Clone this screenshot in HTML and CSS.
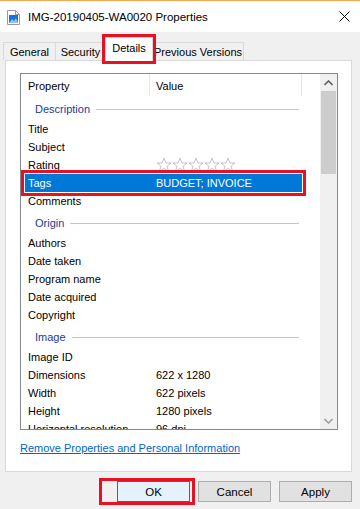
FILE: index.html
```html
<!DOCTYPE html>
<html lang="en">
<head>
    <meta charset="UTF-8">
    <meta name="viewport" content="width=device-width, initial-scale=1.0">
    <title>IMG-20190405-WA0020 Properties</title>
    <link rel="stylesheet" href="styles.css">
</head>
<body>
    <div class="window">
        <div class="titlebar">
            <svg class="file-icon" width="13" height="15" viewBox="0 0 13 15">
                <path d="M0.5 0.5h8l4 4v10h-12z" fill="#fff" stroke="#9a9a9a"/>
                <path d="M8.5 0.5v4h4" fill="none" stroke="#9a9a9a"/>
                <rect x="2" y="5" width="9" height="8" fill="#1a73d4"/>
                <path d="M2 13l3-4 2 2 2-3 2 5z" fill="#8ec4f5"/>
            </svg>
            <span class="title">IMG-20190405-WA0020 Properties</span>
            <svg class="close" width="11" height="11" viewBox="0 0 11 11">
                <path d="M0.5 0.5l10 10M10.5 0.5l-10 10" stroke="#000" stroke-width="1"/>
            </svg>
        </div>

        <div class="tabs">
            <div class="tab tab-general">General</div>
            <div class="tab tab-security">Security</div>
            <div class="tab tab-details active">Details</div>
            <div class="tab tab-previous">Previous Versions</div>
        </div>

        <div class="panel">
            <div class="list">
                <div class="list-content">
                    <div class="list-header">
                        <div class="col-head col-prop">Property</div>
                        <div class="col-head col-value">Value</div>
                    </div>
                    <div class="rows">
                        <div class="group"><span>Description</span></div>
                        <div class="row"><span>Title</span><span></span></div>
                        <div class="row"><span>Subject</span><span></span></div>
                        <div class="row">
                            <span>Rating</span>
                            <span class="stars">
                                <svg width="82" height="16" viewBox="0 0 82 16">
                                    <g fill="none" stroke="#c4c4c4" stroke-width="1">
                                        <path id="star" d="M8 1l2 5h5l-4 3.3 1.6 5.2L8 11.4 3.4 14.5 5 9.3 1 6h5z"/>
                                        <use href="#star" x="16"/>
                                        <use href="#star" x="32"/>
                                        <use href="#star" x="48"/>
                                        <use href="#star" x="64"/>
                                    </g>
                                </svg>
                            </span>
                        </div>
                        <div class="row selected"><span>Tags</span><span>BUDGET; INVOICE</span></div>
                        <div class="row"><span>Comments</span><span></span></div>
                        <div class="group"><span>Origin</span></div>
                        <div class="row"><span>Authors</span><span></span></div>
                        <div class="row"><span>Date taken</span><span></span></div>
                        <div class="row"><span>Program name</span><span></span></div>
                        <div class="row"><span>Date acquired</span><span></span></div>
                        <div class="row"><span>Copyright</span><span></span></div>
                        <div class="group"><span>Image</span></div>
                        <div class="row"><span>Image ID</span><span></span></div>
                        <div class="row"><span>Dimensions</span><span>622 x 1280</span></div>
                        <div class="row"><span>Width</span><span>622 pixels</span></div>
                        <div class="row"><span>Height</span><span>1280 pixels</span></div>
                        <div class="row"><span>Horizontal resolution</span><span>96 dpi</span></div>
                    </div>
                </div>
                <div class="scrollbar">
                    <div class="arrow">
                        <svg width="9" height="6" viewBox="0 0 9 6"><path d="M0.5 5l4-4 4 4" fill="none" stroke="#606060" stroke-width="1.6"/></svg>
                    </div>
                    <div class="track"><div class="thumb"></div></div>
                    <div class="arrow">
                        <svg width="9" height="6" viewBox="0 0 9 6"><path d="M0.5 1l4 4 4-4" fill="none" stroke="#a0a0a0" stroke-width="1.6"/></svg>
                    </div>
                </div>
            </div>
            <a class="remove-link" href="#">Remove Properties and Personal Information</a>
        </div>

        <div class="buttons">
            <span class="highlight"><button class="btn btn-default">OK</button></span>
            <button class="btn btn-cancel">Cancel</button>
            <button class="btn">Apply</button>
        </div>
    </div>
</body>
</html>
```

FILE: styles.css
```css
body {
    margin: 0;
    padding: 0;
    background-color: #f0f0f0;
    font-family: "Liberation Sans", Arial, sans-serif;
    font-size: 11px;
    color: #000;
}
.window {
    width: 360px;
    height: 509px;
    overflow: hidden;
    background-color: #f0f0f0;
}
.titlebar {
    height: 31px;
    background-color: #fff;
    border-top: 1px solid #f5a94f;
    display: flex;
    align-items: center;
    padding-left: 7px;
}
.file-icon {
    margin-right: 8px;
    margin-top: 1px;
}
.title {
    flex: 1;
    font-size: 11.5px;
}
.close {
    margin-right: 10px;
}

/* Tabs */
.tabs {
    height: 28px;
    display: flex;
    align-items: flex-end;
    padding-left: 3px;
}
.tab {
    height: 17px;
    line-height: 18px;
    border: 1px solid #d9d9d9;
    border-bottom: none;
    text-align: center;
    white-space: nowrap;
    box-sizing: content-box;
    margin-right: -1px;
}
.tab-general { width: 51px; }
.tab-security { width: 49px; }
.tab-details { width: 46px; }
.tab-previous { width: 90px; }
.tab.active {
    height: 23px;
    line-height: 20px;
    background-color: #fff;
    margin-bottom: -1px;
    position: relative;
    z-index: 1;
    outline: 3px solid #e81123;
    outline-offset: 0;
}

/* Panel */
.panel {
    margin: 0 8px 0 5px;
    height: 412px;
    background-color: #fff;
    border: 1px solid #d9d9d9;
    padding: 12px 0 0 14px;
    box-sizing: border-box;
}
.list {
    width: 318px;
    height: 357px;
    border: 1px solid #828790;
    box-sizing: border-box;
    display: flex;
}
.list-content {
    flex: 1;
    overflow: hidden;
    padding-left: 4px;
}
.list-header {
    height: 22px;
    display: flex;
    align-items: center;
}
.col-head {
    height: 22px;
    line-height: 25px;
    box-sizing: border-box;
}
.col-prop {
    width: 125px;
    padding-left: 3px;
    border-right: 1px solid #e5e5e5;
}
.col-value {
    width: 152px;
    padding-left: 6px;
    border-right: 1px solid #e5e5e5;
}
.group {
    height: 24px;
    padding: 4px 0 2px 10px;
    box-sizing: border-box;
    display: flex;
    align-items: center;
    color: #1e3a9c;
    width: 274px;
}
.group::after {
    content: "";
    flex: 1;
    height: 1px;
    margin-left: 6px;
    background-color: #b4c6ea;
}
.row {
    height: 18px;
    line-height: 18px;
    display: grid;
    grid-template-columns: 128px 1fr;
    padding-left: 3px;
    width: 274px;
    white-space: nowrap;
}
.row.selected {
    background-color: #0078d7;
    color: #fff;
    outline: 3px solid #e81123;
    outline-offset: 1px;
}
.stars {
    display: flex;
    align-items: center;
}

/* Scrollbar */
.scrollbar {
    width: 17px;
    background-color: #f0f0f0;
    display: flex;
    flex-direction: column;
}
.arrow {
    height: 17px;
    display: flex;
    align-items: center;
    justify-content: center;
}
.track {
    flex: 1;
    padding: 0 1px;
}
.thumb {
    height: 83px;
    background-color: #cdcdcd;
}

.remove-link {
    display: inline-block;
    margin-top: 12px;
    color: #0066cc;
    text-decoration: underline;
}

/* Buttons */
.buttons {
    display: flex;
    justify-content: flex-end;
    align-items: center;
    padding: 6px 8px 0 0;
}
.highlight {
    display: flex;
    border: 3px solid #e81123;
    padding: 0 2px 0 15px;
    margin-right: 3px;
}
.btn {
    width: 73px;
    height: 21px;
    background-color: #e1e1e1;
    border: 1px solid #adadad;
    font-family: "Liberation Sans", Arial, sans-serif;
    font-size: 11.5px;
    color: #000;
    padding: 0;
}
.btn-default {
    background-color: #e5f1fb;
    border-color: #0078d7;
}
.btn-cancel {
    margin-right: 8px;
}
```
